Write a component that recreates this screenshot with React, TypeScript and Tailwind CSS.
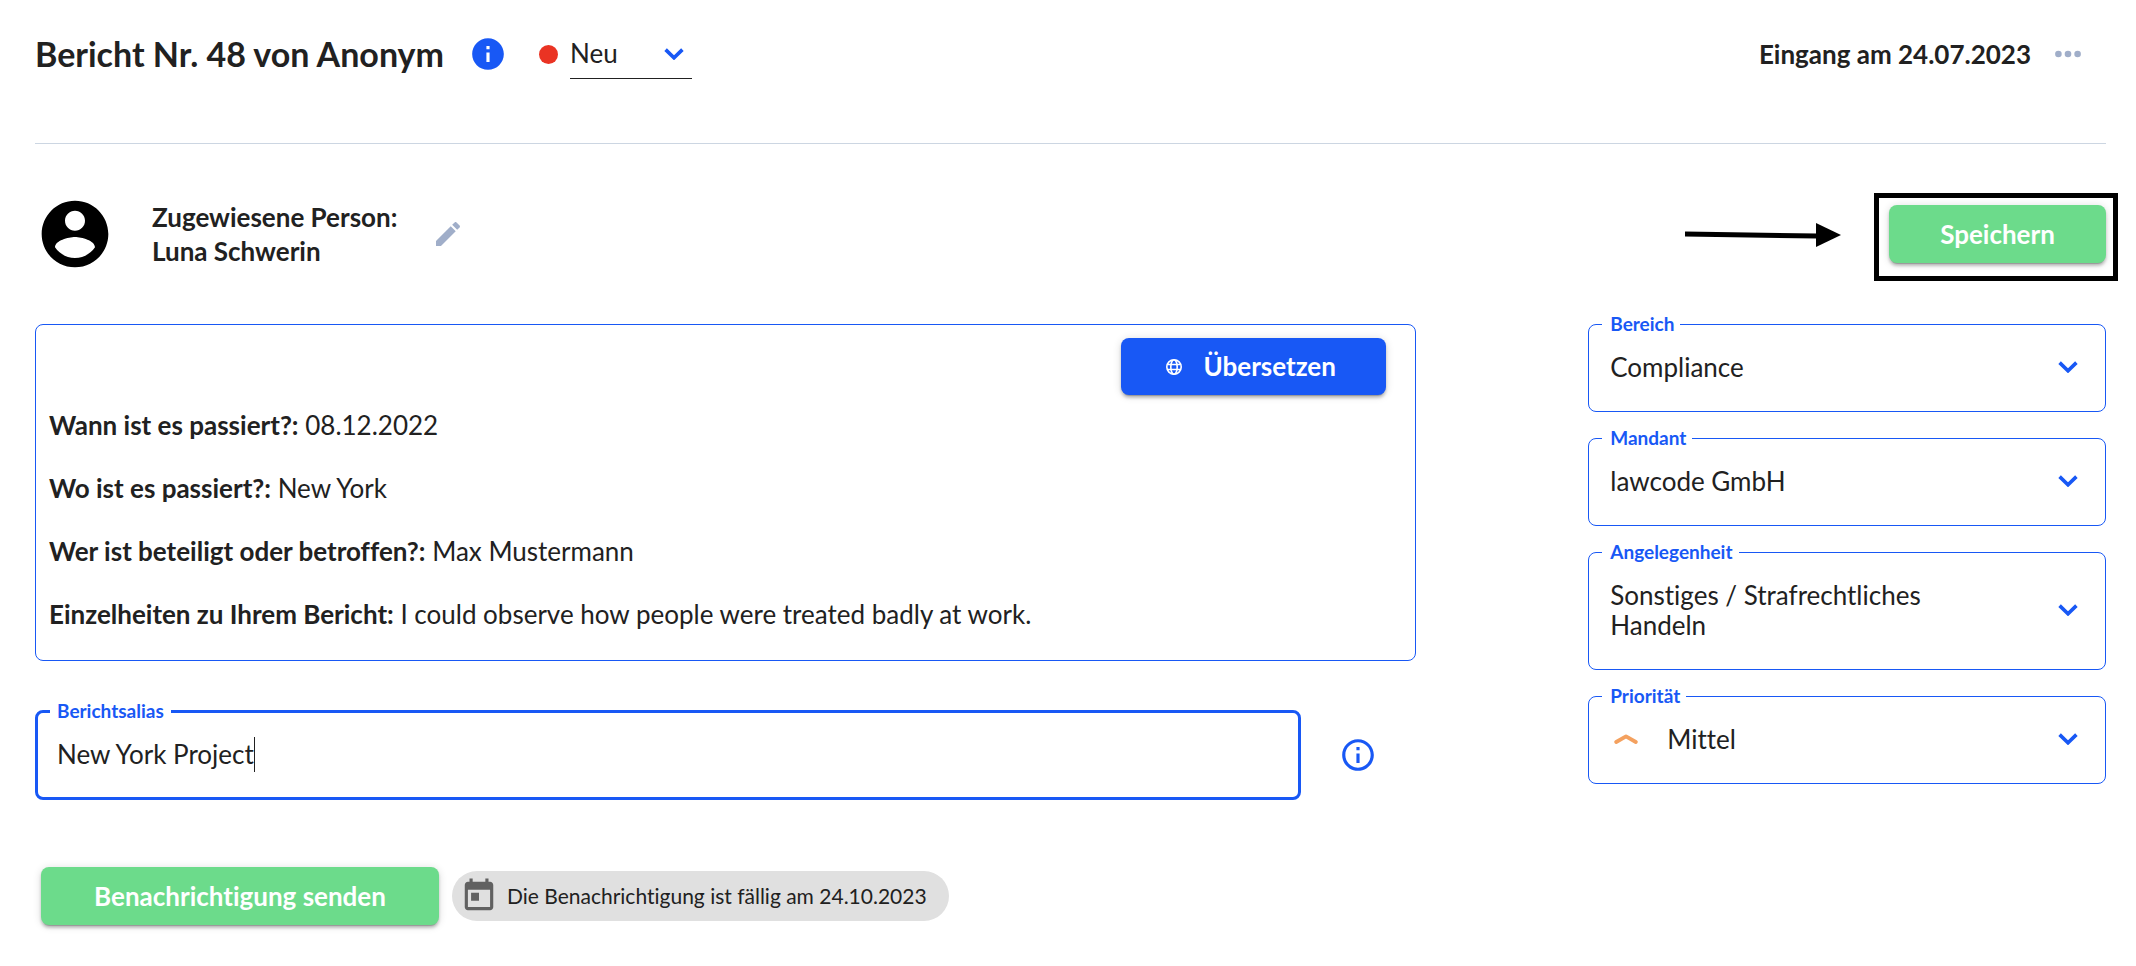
import { useState, type ReactNode } from "react";

const reportFacts = [
  { question: "Wann ist es passiert?:", answer: "08.12.2022" },
  { question: "Wo ist es passiert?:", answer: "New York" },
  { question: "Wer ist beteiligt oder betroffen?:", answer: "Max Mustermann" },
  {
    question: "Einzelheiten zu Ihrem Bericht:",
    answer: "I could observe how people were treated badly at work.",
  },
];

const raised =
  "shadow-[0_3px_1px_-2px_rgba(0,0,0,0.2),0_3px_3px_0_rgba(0,0,0,0.2),0_1px_8px_0_rgba(0,0,0,0.14)]";

function Chevron() {
  return (
    <svg
      viewBox="0 0 20 12"
      className="pointer-events-none h-3 w-5 shrink-0 text-[#1858f5]"
      fill="none"
      stroke="currentColor"
      strokeWidth="3.6"
      aria-hidden="true"
    >
      <path d="M1.6 1.6 10 9.8l8.4-8.2" />
    </svg>
  );
}

function SelectField({
  id,
  label,
  value,
  icon,
  twoLines = false,
}: {
  id: string;
  label: string;
  value: string;
  icon?: ReactNode;
  twoLines?: boolean;
}) {
  return (
    <fieldset className="min-w-0 rounded-lg border border-[#1858f5] pl-[13px]">
      <legend className="h-6 pr-[6px] pl-2 text-[19px] leading-6 font-bold text-[#1858f5]">
        <label htmlFor={id}>{label}</label>
      </legend>
      <div className="flex items-center pt-4 pr-[27px] pb-[29px] pl-2">
        {icon}
        <select
          id={id}
          defaultValue={value}
          className={`min-w-0 flex-1 appearance-none bg-transparent leading-[30px] outline-none ${
            twoLines ? "h-[60px] pr-20 whitespace-pre-wrap" : "h-[30px]"
          }`}
        >
          <option>{value}</option>
        </select>
        <Chevron />
      </div>
    </fieldset>
  );
}

export default function App() {
  const [alias, setAlias] = useState("New York Project");

  return (
    <div className="bg-white pr-[30px] pb-10 pl-[35px] font-['Lato',sans-serif] text-[26px] text-[#212121] [font-variant-ligatures:none]">
      <header className="flex items-center justify-between border-b border-[#ccd6e2] pt-[29px] pb-16">
        <div className="flex items-center">
          <h1 className="text-[34px] leading-[50px] font-bold">Bericht Nr. 48 von Anonym</h1>
          <button type="button" aria-label="Informationen zum Bericht" className="ml-[25px] text-[#1858f5]">
            <svg viewBox="0 0 24 24" className="size-[38px]" fill="currentColor" aria-hidden="true">
              <path d="M12 2C6.48 2 2 6.48 2 12s4.48 10 10 10 10-4.48 10-10S17.52 2 12 2zm1 15h-2v-6h2v6zm0-8h-2V7h2v2z" />
            </svg>
          </button>
          <span className="ml-8 size-[19px] rounded-full bg-[#ea3323]" />
          <div className="ml-3 flex w-[122px] items-center border-b border-[#212121] pr-2">
            <select
              aria-label="Status"
              defaultValue="Neu"
              className="h-[49px] min-w-0 flex-1 appearance-none bg-transparent outline-none"
            >
              <option>Neu</option>
            </select>
            <Chevron />
          </div>
        </div>
        <div className="flex items-center pr-[25px]">
          <p className="font-bold">Eingang am 24.07.2023</p>
          <button type="button" aria-label="Weitere Aktionen" className="ml-6 text-[#a0aec9]">
            <svg viewBox="0 0 26 8" className="h-2 w-[26px]" fill="currentColor" aria-hidden="true">
              <circle cx="3.4" cy="4" r="3.3" />
              <circle cx="13" cy="4" r="3.3" />
              <circle cx="22.6" cy="4" r="3.3" />
            </svg>
          </button>
        </div>
      </header>

      <section className="flex items-center justify-between pt-[50px]">
        <div className="flex items-center">
          <svg viewBox="0 0 24 24" className="size-20 text-black" fill="currentColor" aria-hidden="true">
            <path d="M12 2C6.48 2 2 6.48 2 12s4.48 10 10 10 10-4.48 10-10S17.52 2 12 2zm0 3c1.66 0 3 1.34 3 3s-1.34 3-3 3-3-1.34-3-3 1.34-3 3-3zm0 14.2c-2.5 0-4.71-1.28-6-3.22.03-1.99 4-3.08 6-3.08 1.99 0 5.97 1.09 6 3.08-1.29 1.94-3.5 3.22-6 3.22z" />
          </svg>
          <p className="ml-[37px] leading-[34px] font-bold">
            Zugewiesene Person:
            <br />
            Luna Schwerin
          </p>
          <button type="button" aria-label="Zugewiesene Person bearbeiten" className="ml-[35px] text-[#a0aec9]">
            <svg viewBox="0 0 24 24" className="size-8" fill="currentColor" aria-hidden="true">
              <path d="M3 17.25V21h3.75L17.81 9.94l-3.75-3.75L3 17.25zM20.71 7.04c.39-.39.39-1.02 0-1.41l-2.34-2.34c-.39-.39-1.02-.39-1.41 0l-1.83 1.83 3.75 3.75 1.83-1.83z" />
            </svg>
          </button>
        </div>
        <div className="flex items-center">
          <svg viewBox="0 0 156 26" className="mr-12 h-[26px] w-[156px]" aria-hidden="true">
            <path d="M0 13 132 15" stroke="black" strokeWidth="5" />
            <path d="M131 2v24l25-12z" fill="black" />
          </svg>
          <div className="relative">
            <div className="pointer-events-none absolute -top-3 -right-3 -bottom-[18px] -left-[15px] border-5 border-black" />
            <button
              type="button"
              className={`h-[58px] w-[217px] rounded-lg bg-[#6cdb8b] font-bold text-white ${raised}`}
            >
              Speichern
            </button>
          </div>
        </div>
      </section>

      <main className="flex items-start justify-between pt-[38px]">
        <div className="w-2/3 pt-3">
          <article className="rounded-lg border border-[#1858f5] px-[13px] pt-[13px] pb-7">
            <div className="mb-3 flex justify-end pr-4">
              <button
                type="button"
                className={`flex h-[57px] w-[265px] items-center justify-center rounded-lg bg-[#1858f5] pr-1 font-bold text-white ${raised}`}
              >
                <svg
                  viewBox="0 0 16 16"
                  className="mr-[21px] size-4"
                  fill="none"
                  stroke="currentColor"
                  strokeWidth="1.6"
                  aria-hidden="true"
                >
                  <circle cx="8" cy="8" r="7.2" />
                  <ellipse cx="8" cy="8" rx="3.2" ry="7.2" />
                  <path d="M1.4 5.5h13.2M1.4 10.5h13.2" />
                </svg>
                Übersetzen
              </button>
            </div>
            <dl className="flex flex-col gap-[27px]">
              {reportFacts.map((fact) => (
                <div key={fact.question} className="leading-9">
                  <dt className="inline font-bold">{fact.question}</dt>{" "}
                  <dd className="inline">{fact.answer}</dd>
                </div>
              ))}
            </dl>
          </article>

          <div className="mt-[38px] flex items-center">
            <fieldset className="w-11/12 min-w-0 rounded-lg border-3 border-[#1858f5] pl-3">
              <legend className="h-6 px-[7px] text-[19px] leading-6 font-bold text-[#1858f5]">
                <label htmlFor="alias">Berichtsalias</label>
              </legend>
              <div className="flex h-[74px] items-start pt-[14px] pl-[7px]">
                <input
                  id="alias"
                  value={alias}
                  onChange={(event) => setAlias(event.target.value)}
                  className="field-sizing-content h-[35px] max-w-full caret-transparent outline-none"
                />
                <span className="h-[35px] w-px bg-[#212121]" />
              </div>
            </fieldset>
            <div className="flex flex-1 justify-center pt-[10px]">
              <button type="button" aria-label="Informationen zum Berichtsalias" className="text-[#1858f5]">
                <svg viewBox="0 0 24 24" className="size-[38px]" fill="currentColor" aria-hidden="true">
                  <path d="M11 7h2v2h-2zm0 4h2v6h-2zm1-9C6.48 2 2 6.48 2 12s4.48 10 10 10 10-4.48 10-10S17.52 2 12 2zm0 18c-4.41 0-8-3.59-8-8s3.59-8 8-8 8 3.59 8 8-3.59 8-8 8z" />
                </svg>
              </button>
            </div>
          </div>

          <div className="mt-[67px] flex items-center gap-[13px] pl-[6px]">
            <button
              type="button"
              className={`h-[58px] w-[398px] rounded-lg bg-[#6cdb8b] font-bold text-white ${raised}`}
            >
              Benachrichtigung senden
            </button>
            <p className="flex h-[50px] items-center rounded-full bg-[#e0e0e0] pr-[22px] pl-2 text-[21px]">
              <svg viewBox="0 0 24 24" className="mr-[9px] size-[38px] text-[#616161]" fill="currentColor" aria-hidden="true">
                <path d="M19 3h-1V1h-2v2H8V1H6v2H5c-1.11 0-1.99.9-1.99 2L3 19c0 1.1.89 2 2 2h14c1.1 0 2-.9 2-2V5c0-1.1-.9-2-2-2zm0 16H5V8h14v11zM7 10h5v5H7z" />
              </svg>
              Die Benachrichtigung ist fällig am 24.10.2023
            </p>
          </div>
        </div>

        <div className="flex w-1/4 flex-col gap-[14px]">
          <SelectField id="bereich" label="Bereich" value="Compliance" />
          <SelectField id="mandant" label="Mandant" value="lawcode GmbH" />
          <SelectField id="angelegenheit" label="Angelegenheit" value="Sonstiges / Strafrechtliches Handeln" twoLines />
          <SelectField
            id="prioritaet"
            label="Priorität"
            value="Mittel"
            icon={
              <svg
                viewBox="0 0 24 12"
                className="mr-[29px] ml-1 h-3 w-6 shrink-0"
                fill="none"
                stroke="#f4a15f"
                strokeWidth="3.8"
                strokeLinecap="round"
                strokeLinejoin="round"
                aria-hidden="true"
              >
                <path d="M2.2 9 12 3.4 21.8 9" />
              </svg>
            }
          />
        </div>
      </main>
    </div>
  );
}
